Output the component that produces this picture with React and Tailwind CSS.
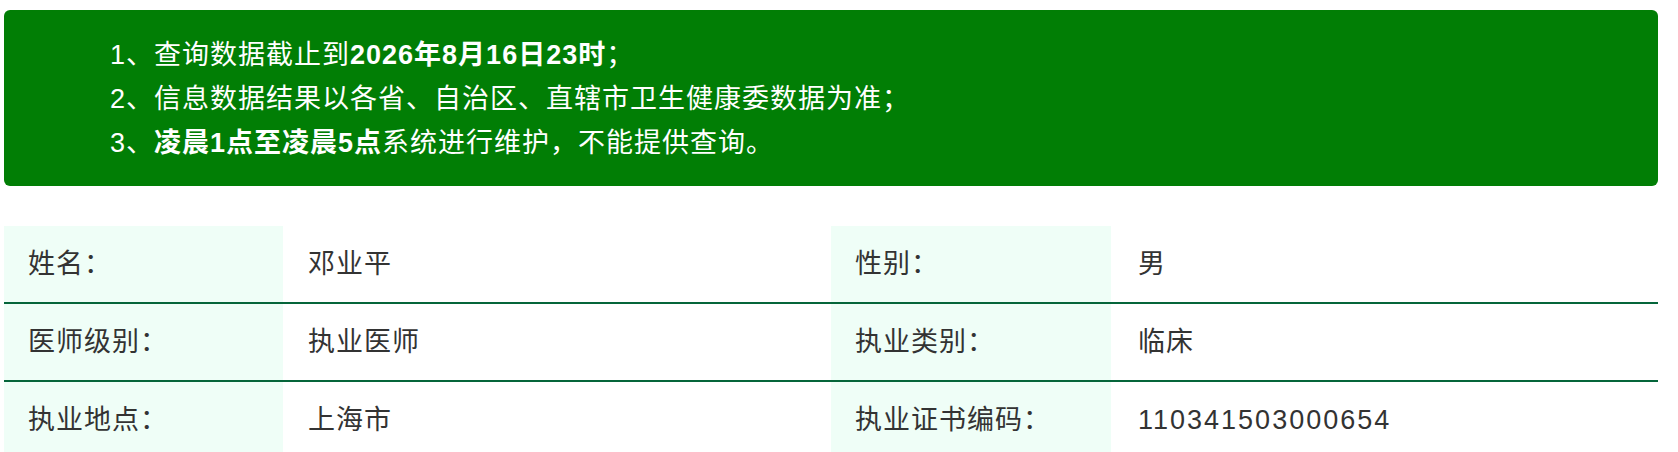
const rows = [
  ['姓名：', '邓业平', '性别：', '男'],
  ['医师级别：', '执业医师', '执业类别：', '临床'],
  ['执业地点：', '上海市', '执业证书编码：', '110341503000654'],
];

export default function App() {
  return (
    <div className="min-h-screen bg-white pt-[10px] pl-[4px] pr-[20px] font-['Liberation_Sans','Noto_Sans_CJK_SC',sans-serif]">
      {/* Notice */}
      <div className="rounded-[6px] bg-[#017e05] pt-[23px] pb-[21px] pl-[106px] text-[27px] leading-[44px] tracking-[1px] text-white">
        <p>1、查询数据截止到<b>2026年8月16日23时</b>；</p>
        <p>2、信息数据结果以各省、自治区、直辖市卫生健康委数据为准；</p>
        <p>3、<b>凌晨1点至凌晨5点</b>系统进行维护，不能提供查询。</p>
      </div>

      {/* Info table */}
      <div className="mt-[40px] text-[27px] tracking-[1px] text-[#333]">
        {rows.map((r, i) => (
          <div key={i} className="grid h-[78px] grid-cols-[279px_548px_280px_1fr] border-b-2 border-[#05653a]">
            <div className="flex items-center bg-[#effef7] pl-[24px]">{r[0]}</div>
            <div className="flex items-center pl-[25px]">{r[1]}</div>
            <div className="flex items-center bg-[#effef7] pl-[24px]">{r[2]}</div>
            <div className={`flex items-center pl-[27px] ${i === 2 ? 'tracking-[2px]' : ''}`}>{r[3]}</div>
          </div>
        ))}
      </div>
    </div>
  );
}
